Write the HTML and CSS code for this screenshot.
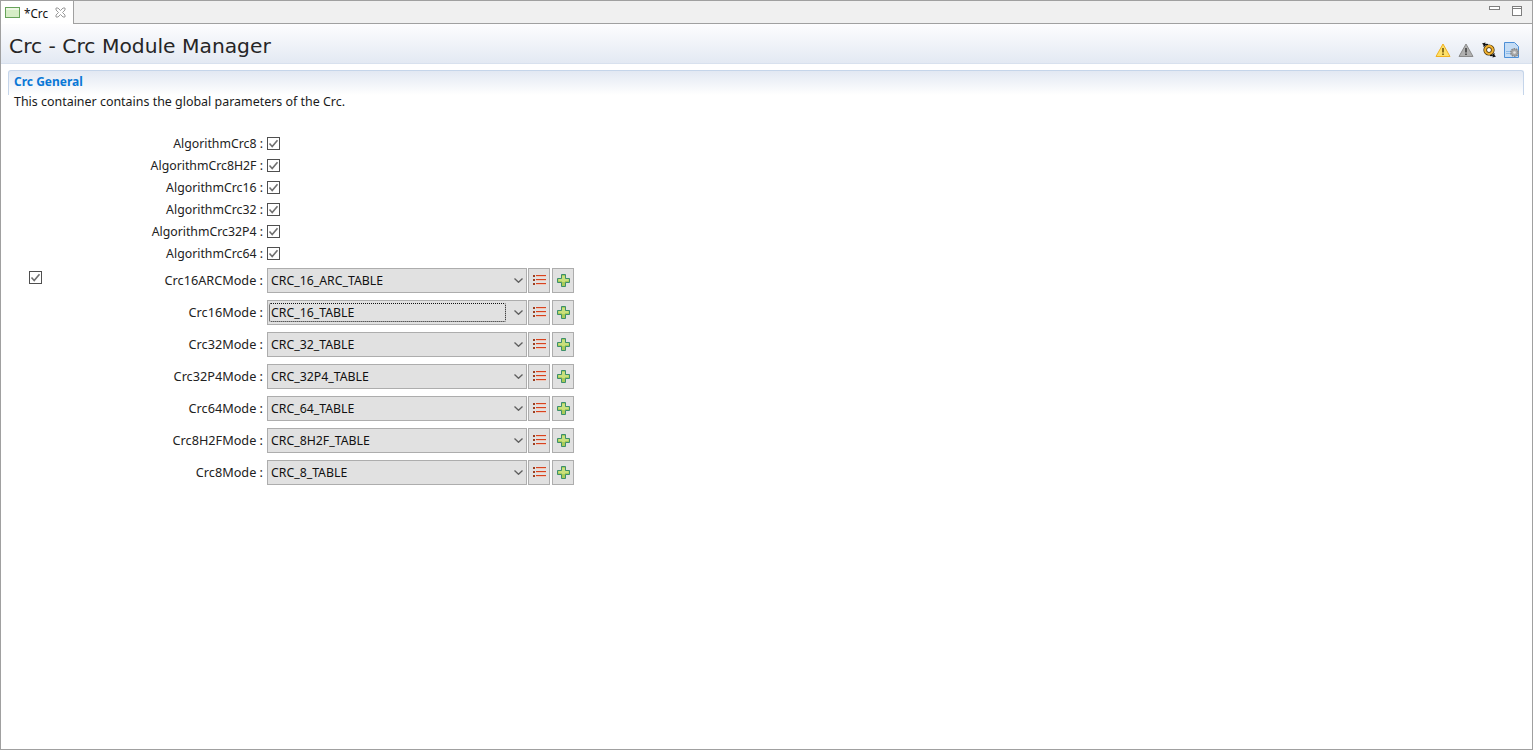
FILE: index.html
```html
<!DOCTYPE html>
<html lang="en">
<head>
<meta charset="utf-8">
<title>Crc</title>
<link rel="stylesheet" href="styles.css">
</head>
<body>
<svg class="defs" width="0" height="0" aria-hidden="true">
  <symbol id="check" viewBox="0 0 13 13">
    <rect x=".5" y=".5" width="12" height="12" fill="#fff" stroke="#4f4f4f"/>
    <path d="M2.500 6.500 5.200 9.500 10.500 3.200" fill="none" stroke="#707070" stroke-width="1.600"/>
  </symbol>
  <symbol id="list" viewBox="0 0 13 11">
    <path d="M0 0h2v2H0zM0 4h2v2H0zM0 8h2v2H0z" fill="#9c3f20"/>
    <path d="M3 .5h10M3 4.500h10M3 8.500h10" stroke="#d8431f" fill="none"/>
    <path d="M3 1.500h10M3 5.500h10M3 9.500h10" stroke="#eec6b8" fill="none"/>
  </symbol>
  <symbol id="plus" viewBox="0 0 13 13">
    <path d="M4.500.5h4v4h4v4h-4v4h-4v-4h-4v-4h4z" fill="#a8cc58" stroke="#3c8f6c"/>
    <path d="M5 2h3v3h3.500v2H8v1H5V7H1.500V5H5z" fill="#c9e07c"/>
  </symbol>
  <symbol id="chev" viewBox="0 0 9 5">
    <path d="M.5.500 4.500 4.300 8.500.500" fill="none" stroke="#5f5f5f" stroke-width="1.300"/>
  </symbol>
</svg>
<main class="window">
  <div class="tabbar">
    <div class="tab">
      <svg class="tab-icon" width="15" height="11" viewBox="0 0 15 11"><rect x=".5" y=".5" width="14" height="10" fill="#d6edc6" stroke="#67a35a"/><rect x="1" y="1" width="13" height="2" fill="#eef8e6"/></svg>
      <span class="tab-title">*Crc</span>
      <svg class="tab-close" width="11" height="11" viewBox="0 0 11 11"><path d="M1 1h2l2.500 2.500L8 1h2v2L7.500 5.500 10 8v2H8L5.500 7.500 3 10H1V8l2.500-2.500L1 3z" fill="#fff" stroke="#9a9a9a"/></svg>
    </div>
    <div class="tabbar-fill">
      <svg class="min-icon" width="11" height="4" viewBox="0 0 11 4"><rect x=".5" y=".5" width="10" height="3" fill="#fff" stroke="#7e7e7e"/></svg>
      <svg class="max-icon" width="10" height="10" viewBox="0 0 10 10"><rect x=".5" y=".5" width="9" height="9" fill="#fff" stroke="#7e7e7e"/><path d="M0 2.500h10" stroke="#7e7e7e"/></svg>
    </div>
  </div>
  <header class="form-title">
    <h1>Crc - Crc Module Manager</h1>
    <div class="title-tools">
      <svg width="16" height="16" viewBox="0 0 16 16"><path d="M8 2 15 14.500H1z" fill="#fde06a" stroke="#f0b020" stroke-linejoin="round"/><path d="M7.300 6h1.400v4.500H7.300zM7.300 11.500h1.400V13H7.300z" fill="#5b4300"/></svg>
      <svg width="16" height="16" viewBox="0 0 16 16"><path d="M8 2 15 14.500H1z" fill="#b0b0b0" stroke="#8b8b8b" stroke-linejoin="round"/><path d="M7.300 6h1.400v4.500H7.300zM7.300 11.500h1.400V13H7.300z" fill="#2e2e2e"/></svg>
      <svg width="16" height="16" viewBox="0 0 16 16"><circle cx="8" cy="8" r="3.800" fill="#fff" stroke="#3a2c08" stroke-width="3.600"/><circle cx="8" cy="8" r="3.800" fill="none" stroke="#f0b030" stroke-width="2.200"/><path d="M7 2.500Q3.500 2 2.500 4.500M9 13.500q3.500.5 4.500-2" fill="none" stroke="#111" stroke-width="1.200"/><path d="M1 1.500 4.500.5 4 4.500zM15 14.500 11.500 15.500 12 11.500z" fill="#111"/></svg>
      <svg width="16" height="16" viewBox="0 0 16 16"><path d="M.5.500h10l4 4v11H.5z" fill="#c4dcf5" stroke="#4d8fd6"/><path d="M2 9h6v1H2zM2 11h5v1H2z" fill="#8fbbe8"/><circle cx="10.500" cy="10.500" r="3.700" fill="#a8a8a8" stroke="#8a8a8a" stroke-width="1.600" stroke-dasharray="1.500 .8"/><circle cx="10.500" cy="10.500" r="1.300" fill="#e4e4e4"/></svg>
    </div>
  </header>
  <section class="section">
    <h2 class="section-head">Crc General</h2>
    <p class="section-desc">This container contains the global parameters of the Crc.</p>
    <div class="form">
      <div class="row check-row"><span class="lead"></span><label class="label">AlgorithmCrc8 :</label><svg class="cb"><use href="#check"/></svg></div>
      <div class="row check-row"><span class="lead"></span><label class="label">AlgorithmCrc8H2F :</label><svg class="cb"><use href="#check"/></svg></div>
      <div class="row check-row"><span class="lead"></span><label class="label">AlgorithmCrc16 :</label><svg class="cb"><use href="#check"/></svg></div>
      <div class="row check-row"><span class="lead"></span><label class="label">AlgorithmCrc32 :</label><svg class="cb"><use href="#check"/></svg></div>
      <div class="row check-row"><span class="lead"></span><label class="label">AlgorithmCrc32P4 :</label><svg class="cb"><use href="#check"/></svg></div>
      <div class="row check-row"><span class="lead"></span><label class="label">AlgorithmCrc64 :</label><svg class="cb"><use href="#check"/></svg></div>
      <div class="row combo-row"><span class="lead"><svg class="cb"><use href="#check"/></svg></span><label class="label">Crc16ARCMode :</label><div class="combo"><span class="combo-text">CRC_16_ARC_TABLE</span><svg class="chev"><use href="#chev"/></svg></div><button class="btn"><svg class="ico-list"><use href="#list"/></svg></button><button class="btn"><svg class="ico-plus"><use href="#plus"/></svg></button></div>
      <div class="row combo-row"><span class="lead"></span><label class="label">Crc16Mode :</label><div class="combo"><span class="combo-text focus">CRC_16_TABLE</span><svg class="chev"><use href="#chev"/></svg></div><button class="btn"><svg class="ico-list"><use href="#list"/></svg></button><button class="btn"><svg class="ico-plus"><use href="#plus"/></svg></button></div>
      <div class="row combo-row"><span class="lead"></span><label class="label">Crc32Mode :</label><div class="combo"><span class="combo-text">CRC_32_TABLE</span><svg class="chev"><use href="#chev"/></svg></div><button class="btn"><svg class="ico-list"><use href="#list"/></svg></button><button class="btn"><svg class="ico-plus"><use href="#plus"/></svg></button></div>
      <div class="row combo-row"><span class="lead"></span><label class="label">Crc32P4Mode :</label><div class="combo"><span class="combo-text">CRC_32P4_TABLE</span><svg class="chev"><use href="#chev"/></svg></div><button class="btn"><svg class="ico-list"><use href="#list"/></svg></button><button class="btn"><svg class="ico-plus"><use href="#plus"/></svg></button></div>
      <div class="row combo-row"><span class="lead"></span><label class="label">Crc64Mode :</label><div class="combo"><span class="combo-text">CRC_64_TABLE</span><svg class="chev"><use href="#chev"/></svg></div><button class="btn"><svg class="ico-list"><use href="#list"/></svg></button><button class="btn"><svg class="ico-plus"><use href="#plus"/></svg></button></div>
      <div class="row combo-row"><span class="lead"></span><label class="label">Crc8H2FMode :</label><div class="combo"><span class="combo-text">CRC_8H2F_TABLE</span><svg class="chev"><use href="#chev"/></svg></div><button class="btn"><svg class="ico-list"><use href="#list"/></svg></button><button class="btn"><svg class="ico-plus"><use href="#plus"/></svg></button></div>
      <div class="row combo-row"><span class="lead"></span><label class="label">Crc8Mode :</label><div class="combo"><span class="combo-text">CRC_8_TABLE</span><svg class="chev"><use href="#chev"/></svg></div><button class="btn"><svg class="ico-list"><use href="#list"/></svg></button><button class="btn"><svg class="ico-plus"><use href="#plus"/></svg></button></div>
    </div>
  </section>
</main>
</body>
</html>
```
FILE: styles.css
```css
* { box-sizing: border-box; }
html, body { margin: 0; height: 100%; overflow: hidden; background: #fff; }
body { font-family: "Noto Sans", "Open Sans", sans-serif; font-size: 12px; color: #1a1a1a; }
.defs { position: absolute; }
.window { height: 750px; border: 1px solid #a0a0a0; display: flex; flex-direction: column; background: #fff; }

.tabbar { height: 23px; display: flex; flex: none; background: #f0f0f0; }
.tab { width: 73px; height: 23px; background: #fff; border-right: 1px solid #a0a0a0; display: flex; align-items: center; padding-left: 4px; }
.tab-icon { flex: none; }
.tab-title { margin-left: 4px; font-size: 11.7px; line-height: 16px; color: #111; }
.tab-close { margin-left: 7px; flex: none; }
.tabbar-fill { flex: 1; border-bottom: 1px solid #a0a0a0; display: flex; justify-content: flex-end; align-items: flex-start; padding: 5px 10px 0 0; gap: 12px; }

.form-title { height: 40px; flex: none; display: flex; align-items: flex-start; justify-content: space-between; padding: 0 12px 0 8px; background: linear-gradient(#fdfdfe, #e3e9f3); border-bottom: 1px solid #d8e1ee; }
.form-title h1 { margin: 8px 0 0; font: 400 20.25px/28px "DejaVu Sans", sans-serif; color: #262626; }
.title-tools { display: flex; gap: 7px; margin-top: 18px; }

.section { margin: 6px 8px 0 7px; flex: 1; }
.section-head { height: 25px; margin: 0; padding: 3px 0 0 5px; font: 700 12px/16px "Noto Sans", sans-serif; color: #0a78d6; border: 1px solid #c5d5ea; border-bottom: 0; border-radius: 3px 3px 0 0; background: linear-gradient(#e2e8f3, #fff); }
.section-desc { margin: 0; padding: 0 0 0 6px; height: 14px; font: 400 12.45px/14px "Noto Sans", sans-serif; color: #1a1a1a; }

.form { margin-top: 23px; padding-left: 21px; }
.row { display: flex; align-items: center; }
.check-row { height: 22px; }
.combo-row { height: 32px; }
.lead { width: 14px; flex: none; display: flex; }
.label { width: 220px; flex: none; text-align: right; white-space: nowrap; font-size: 12.3px; color: #222; }
.combo-row .label { font-size: 12.7px; }
.cb { width: 13px; height: 13px; flex: none; margin-left: 4px; }
.lead .cb { margin: -5px 0 0; }
.combo { width: 260px; height: 25px; margin-left: 4px; flex: none; background: #e1e1e1; border: 1px solid #adadad; display: flex; align-items: center; padding-left: 1px; }
.combo-text { width: 237px; height: 19px; line-height: 17px; padding-left: 1px; border: 1px solid transparent; font-size: 12.3px; color: #111; }
.combo-text.focus { border: 1px dotted #111; border-radius: 2px; }
.chev { width: 9px; height: 5px; margin-left: 8px; flex: none; }
.btn { width: 22px; height: 25px; margin: 0 0 0 2px; padding: 0; flex: none; background: #e1e1e1; border: 1px solid #adadad; display: flex; align-items: center; justify-content: center; }
.combo + .btn { margin-left: 1px; }
.ico-list { width: 13px; height: 11px; }
.ico-plus { width: 13px; height: 13px; }
```
